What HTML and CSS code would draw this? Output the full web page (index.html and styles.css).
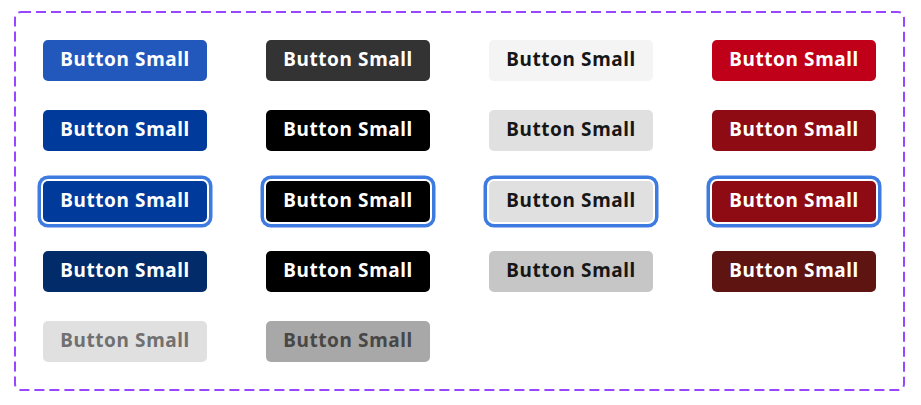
FILE: index.html
```html
<!DOCTYPE html>
<html>
<head>
<meta charset="utf-8">
<link rel="stylesheet" href="styles.css">
</head>
<body>
<div class="frame">
  <svg class="dash" width="891" height="380" viewBox="0 0 891 380"><rect x="1" y="1" width="889" height="378" rx="6" ry="6" fill="none" stroke="#9747ff" stroke-width="2" stroke-dasharray="10 5"/></svg>
  <div class="grid">
    <button class="btn blue">Button Small</button>
    <button class="btn dark">Button Small</button>
    <button class="btn light">Button Small</button>
    <button class="btn red">Button Small</button>

    <button class="btn blue-h">Button Small</button>
    <button class="btn dark-h">Button Small</button>
    <button class="btn light-h">Button Small</button>
    <button class="btn red-h">Button Small</button>

    <button class="btn blue-h focus">Button Small</button>
    <button class="btn dark-h focus">Button Small</button>
    <button class="btn light-h focus">Button Small</button>
    <button class="btn red-h focus">Button Small</button>

    <button class="btn blue-a">Button Small</button>
    <button class="btn dark-a">Button Small</button>
    <button class="btn light-a">Button Small</button>
    <button class="btn red-a">Button Small</button>

    <button class="btn dis">Button Small</button>
    <button class="btn dis-dark">Button Small</button>
  </div>
</div>
</body>
</html>
```
FILE: styles.css
```css
html, body { margin: 0; padding: 0; background: #fff; }
.frame {
  position: relative;
  margin: 11px 16px 0 14px;
  width: 891px;
  height: 380px;
  box-sizing: border-box;
  padding: 29px;
}
.dash { position: absolute; left: 0; top: 0; }
.grid {
  display: grid;
  grid-template-columns: repeat(4, 164px);
  column-gap: 59px;
  row-gap: 29.25px;
}
.btn {
  width: 164px;
  height: 41px;
  border: 0;
  border-radius: 5px;
  font-family: "Noto Sans", sans-serif;
  font-weight: 700;
  font-size: 19px;
  line-height: 1;
  padding: 0 0 2px 0;
  display: flex;
  align-items: center;
  justify-content: center;
  color: #fff;
  letter-spacing: 0.6px;
}
.blue { background: #2258bc; }
.blue-h { background: #003a9b; }
.blue-a { background: #012b69; }
.dark { background: #333333; }
.dark-h, .dark-a { background: #000000; }
.light { background: #f4f4f4; color: #161616; }
.light-h { background: #e0e0e0; color: #161616; }
.light-a { background: #c6c6c6; color: #161616; }
.red { background: #c00018; }
.red-h { background: #8e0b14; }
.red-a { background: #5e1410; }
.dis { background: #e0e0e0; color: #707070; }
.dis-dark { background: #a8a8a8; color: #474747; }
.focus {
  box-shadow: 0 0 0 2px #fff, 0 0 0 5.5px #3e7be0;
}
```
